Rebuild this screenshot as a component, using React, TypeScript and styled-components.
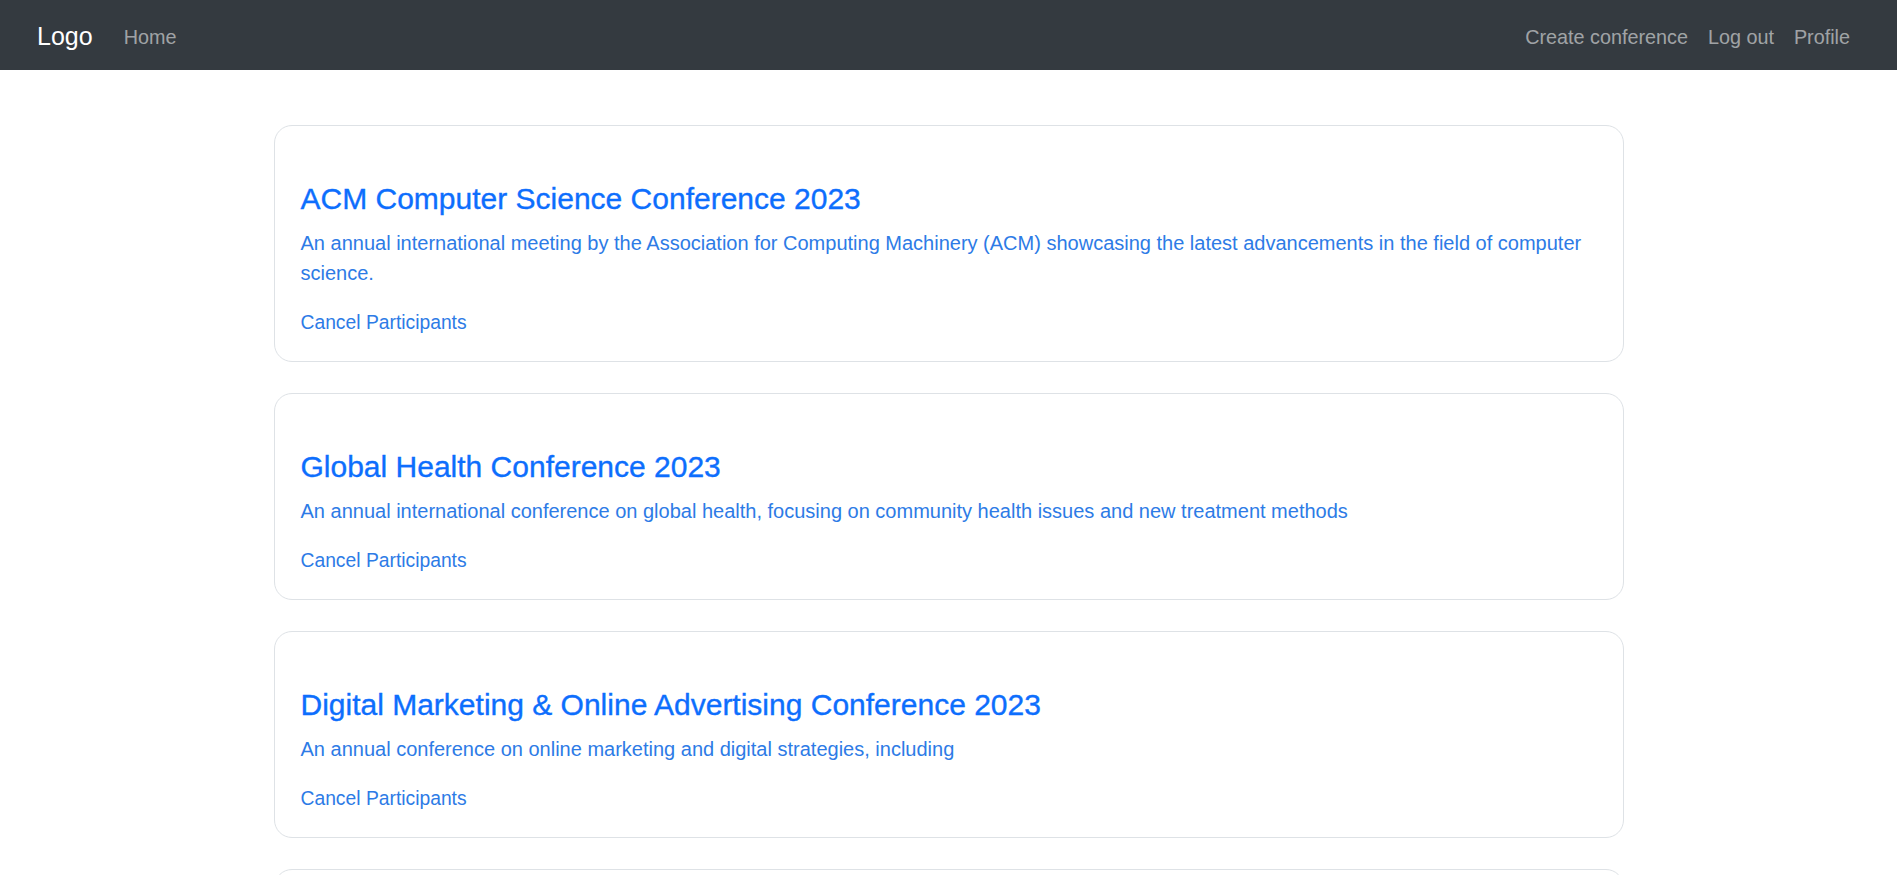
import styled, { createGlobalStyle } from 'styled-components';

const GlobalStyle = createGlobalStyle`
    * {
        box-sizing: border-box;
    }
    body {
        margin: 0;
        background: #fff;
        font-family: 'Liberation Sans', Arial, sans-serif;
    }
`;

const NavBar = styled.nav`
    display: flex;
    align-items: center;
    justify-content: space-between;
    height: 70px;
    padding: 3px 37px 0 37px;
    background-color: #343a40;
`;

const NavGroup = styled.div`
    display: flex;
    align-items: center;
`;

const Brand = styled.a`
    margin-right: 21px;
    font-size: 25px;
    color: #fff;
    text-decoration: none;
`;

const NavLink = styled.a`
    padding: 0 10px;
    font-size: 19.8px;
    line-height: 30px;
    color: rgba(255, 255, 255, 0.55);
    text-decoration: none;
    cursor: pointer;
`;

const Main = styled.main`
    width: 1350px;
    margin: 55px auto 0;
    display: flex;
    flex-direction: column;
    gap: 31px;
`;

const Card = styled.div`
    padding: 55px 24px 23px 26px;
    border: 1px solid #dee2e6;
    border-radius: 18px;
    background: #fff;
`;

const Title = styled.h4`
    margin: 0 0 11px;
    font-size: 30px;
    font-weight: 500;
    line-height: 36px;
    color: #0d6efd;
    -webkit-text-stroke: 0.35px #0d6efd;
`;

const Description = styled.p`
    margin: 0 0 20px;
    font-size: 20px;
    line-height: 30px;
    color: #2d7be6;
`;

const CancelLink = styled.a`
    display: block;
    font-size: 19.3px;
    line-height: 30px;
    color: #2d7be6;
    text-decoration: none;
    cursor: pointer;
`;

const conferences = [
    {
        title: 'ACM Computer Science Conference 2023',
        description:
            'An annual international meeting by the Association for Computing Machinery (ACM) showcasing the latest advancements in the field of computer science.',
    },
    {
        title: 'Global Health Conference 2023',
        description:
            'An annual international conference on global health, focusing on community health issues and new treatment methods',
    },
    {
        title: 'Digital Marketing & Online Advertising Conference 2023',
        description: 'An annual conference on online marketing and digital strategies, including',
    },
    {
        title: 'International Conference on Artificial Intelligence 2023',
        description: 'An annual meeting of researchers and engineers working on machine learning and AI systems',
    },
];

function App() {
    return (
        <>
            <GlobalStyle />
            <NavBar>
                <NavGroup>
                    <Brand>Logo</Brand>
                    <NavLink>Home</NavLink>
                </NavGroup>
                <NavGroup>
                    <NavLink>Create conference</NavLink>
                    <NavLink>Log out</NavLink>
                    <NavLink>Profile</NavLink>
                </NavGroup>
            </NavBar>
            <Main>
                {conferences.map((c) => (
                    <Card key={c.title}>
                        <Title>{c.title}</Title>
                        <Description>{c.description}</Description>
                        <CancelLink>Cancel Participants</CancelLink>
                    </Card>
                ))}
            </Main>
        </>
    );
}

export default App;
